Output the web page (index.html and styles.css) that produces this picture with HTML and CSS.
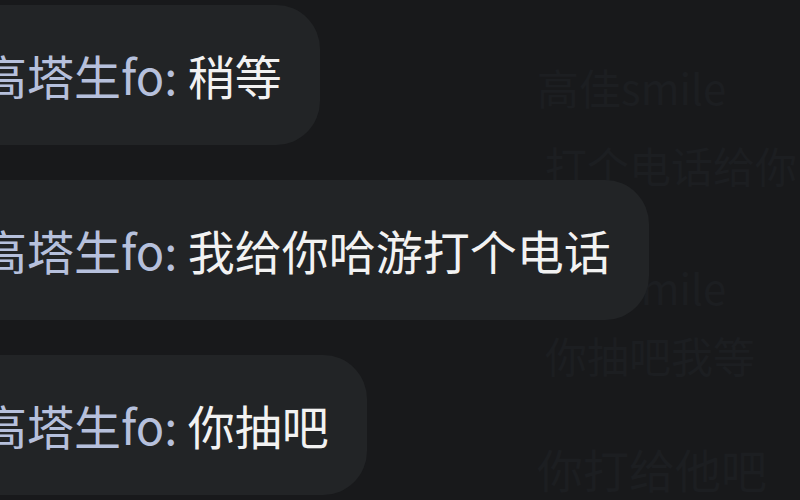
FILE: index.html
```html
<!DOCTYPE html>
<html lang="zh-CN">
<head>
<meta charset="utf-8">
<title>Chat</title>
<link rel="stylesheet" href="styles.css">
</head>
<body>
<div class="screen">
  <div class="ghosts" aria-hidden="true">
    <div class="ghost g1">高佳smile</div>
    <div class="ghost g2">打个电话给你</div>
    <div class="ghost g3">高佳smile</div>
    <div class="ghost g4">你抽吧我等</div>
    <div class="ghost g5">你打给他吧</div>
  </div>
  <div class="chat">
    <div class="bubble"><span class="name">高塔生fo:</span> <span class="msg">稍等</span></div>
    <div class="bubble"><span class="name">高塔生fo:</span> <span class="msg">我给你哈游打个电话</span></div>
    <div class="bubble"><span class="name">高塔生fo:</span> <span class="msg">你抽吧</span></div>
  </div>
</div>
</body>
</html>
```
FILE: styles.css
```css
html, body {
  margin: 0;
  padding: 0;
  background: #18191b;
}
.screen {
  position: relative;
  width: 800px;
  height: 500px;
  overflow: hidden;
  background: #18191b;
  font-family: "Noto Sans CJK SC", "Noto Sans", sans-serif;
}
.chat {
  display: flex;
  flex-direction: column;
  align-items: flex-start;
  gap: 35px;
  padding-top: 5px;
  margin-left: -62px;
  position: relative;
}
.bubble {
  background: #222426;
  border-radius: 44px;
  padding: 38px 38px 38px 42px;
  font-size: 47px;
  line-height: 64px;
  white-space: nowrap;
}
.name {
  color: #b6c0dc;
}
.msg {
  color: #f2f2f2;
}
.ghosts {
  position: absolute;
  inset: 0;
}
.ghost {
  position: absolute;
  color: #1c1e21;
  font-size: 42px;
  line-height: 50px;
  white-space: nowrap;
}
.g1 { left: 537px; top: 62px; }
.g2 { left: 545px; top: 140px; }
.g3 { left: 537px; top: 262px; }
.g4 { left: 545px; top: 330px; }
.g5 { left: 537px; top: 440px; font-size: 46px; line-height: 56px; }
```
